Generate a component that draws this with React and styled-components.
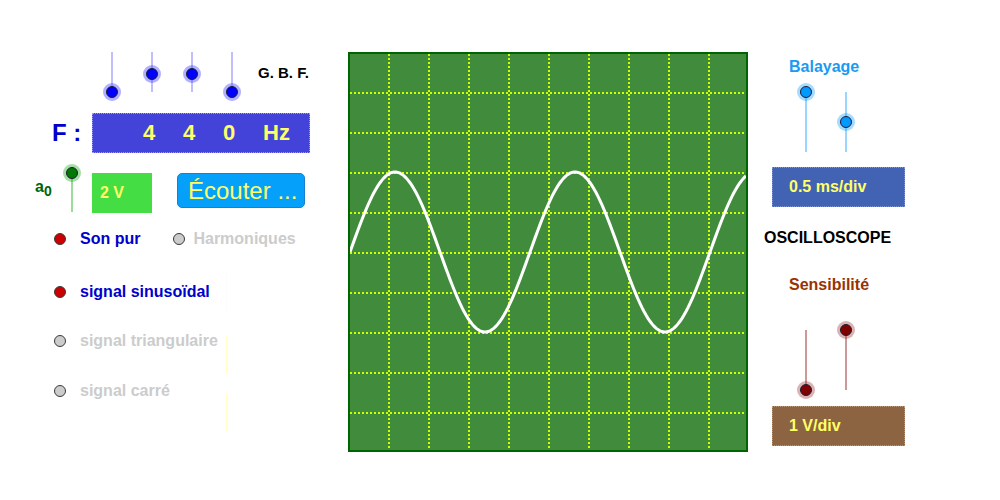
import React from "react"
import styled, { createGlobalStyle } from "styled-components"

const GlobalStyle = createGlobalStyle`
  body {
    margin: 0;
    background: #fff;
    font-family: "Liberation Sans", Arial, sans-serif;
  }
`

const knobs = {
  blue: { fill: "#0000ff", halo: "rgba(60, 60, 255, 0.4)", line: "#8080ff", lw: 1 },
  green: { fill: "#007a00", halo: "rgba(0, 160, 0, 0.35)", line: "#99dd99", lw: 2 },
  sky: { fill: "#0099ff", halo: "rgba(0, 153, 255, 0.35)", line: "#99d6ff", lw: 2 },
  wine: { fill: "#800000", halo: "rgba(150, 40, 40, 0.35)", line: "#cc9999", lw: 2 },
}

const Page = styled.div`
  display: flex;
  align-items: flex-start;
  width: 1000px;
  height: 500px;
  overflow: hidden;
`

const LeftPanel = styled.div`
  width: 348px;
  padding-top: 52px;
  display: flex;
  flex-direction: column;
`

const SliderRow = styled.div`
  display: flex;
  height: 48px;
  padding-left: 104px;
`

const SliderGroup = styled.div`
  display: flex;
  gap: 24px;
`

const Gbf = styled.div`
  margin: 13px 0 0 18px;
  font-size: 15px;
  line-height: 16px;
  font-weight: bold;
  color: #000;
`

const Track = styled.div`
  position: relative;
  flex-shrink: 0;
  width: 16px;
  height: ${({ $h }) => $h}px;

  &::before {
    content: "";
    position: absolute;
    left: 50%;
    transform: translateX(-50%);
    top: ${({ $from }) => $from}px;
    height: ${({ $len }) => $len}px;
    width: ${({ $kind }) => knobs[$kind].lw}px;
    background: ${({ $kind }) => knobs[$kind].line};
  }
`

const Knob = styled.span`
  position: absolute;
  left: 2px;
  top: ${({ $at }) => $at - 6}px;
  width: 12px;
  height: 12px;
  box-sizing: border-box;
  border-radius: 50%;
  border: 1px solid #1c1c33;
  background: ${({ $kind }) => knobs[$kind].fill};
  box-shadow: 0 0 0 3px ${({ $kind }) => knobs[$kind].halo};
`

const Slider = ({ kind, h, from, len, at }) => (
  <Track $kind={kind} $h={h} $from={from} $len={len}>
    <Knob $kind={kind} $at={at} />
  </Track>
)

const FRow = styled.div`
  display: flex;
  align-items: center;
  height: 40px;
  margin-top: 13px;
  padding-left: 52px;
`

const FLabel = styled.div`
  width: 40px;
  font-size: 24px;
  font-weight: bold;
  color: #0000cc;
`

const FreqBox = styled.div`
  display: flex;
  align-items: center;
  box-sizing: border-box;
  width: 218px;
  height: 40px;
  padding-left: 50px;
  background: #4343d9;
  border: 1px dotted #9a9aff;
`

const Digit = styled.span`
  width: 40px;
  font-size: 22px;
  font-weight: bold;
  color: #ffff66;
`

const AmpRow = styled.div`
  display: flex;
  align-items: flex-start;
  height: 48px;
  margin-top: 12px;
  padding-left: 35px;
`

const A0 = styled.div`
  width: 29px;
  margin-top: 13px;
  font-size: 16px;
  font-weight: bold;
  color: #006600;

  sub {
    font-size: 14px;
  }
`

const LevelBox = styled.div`
  display: flex;
  align-items: center;
  box-sizing: border-box;
  width: 60px;
  height: 40px;
  margin: 8px 0 0 12px;
  padding-left: 8px;
  background: #44dd44;
  font-size: 16px;
  font-weight: bold;
  color: #ffff66;
`

const ListenButton = styled.button`
  box-sizing: border-box;
  width: 128px;
  height: 35px;
  margin: 8px 0 0 25px;
  padding: 0 0 0 10px;
  text-align: left;
  background: #05a0fa;
  border: 1px solid #1a7fd0;
  border-radius: 5px;
  font-family: "Liberation Sans", Arial, sans-serif;
  font-size: 24px;
  line-height: 31px;
  color: #ffff66;
`

const RadioList = styled.div`
  display: flex;
  flex-direction: column;
  margin-top: 16px;
`

const RadioRow = styled.div`
  position: relative;
  display: flex;
  align-items: center;
  height: 20px;
  margin-top: ${({ $mt }) => $mt || 0}px;
  padding-left: 54px;

  ${({ $hint }) =>
    $hint &&
    `
    &::after {
      content: "";
      position: absolute;
      left: 226px;
      top: ${$hint}px;
      height: 37px;
      border-left: 1px dotted #ffffc0;
    }
  `}
`

const Radio = styled.span`
  flex-shrink: 0;
  width: 12px;
  height: 12px;
  box-sizing: border-box;
  border-radius: 50%;
  border: 1px solid #3a3a3a;
  background: ${({ $on }) => ($on ? "#cc0000" : "#cccccc")};
  margin-left: ${({ $ml }) => $ml || 0}px;
`

const RadioText = styled.span`
  margin-left: ${({ $ml }) => $ml || 14}px;
  font-size: 16px;
  font-weight: bold;
  color: ${({ $on }) => ($on ? "#0000cc" : "#cccccc")};
`

const ScreenColumn = styled.div`
  padding-top: 52px;
`

const Screen = styled.div`
  box-sizing: border-box;
  width: 400px;
  height: 400px;
  background: #418b3d;
  border: 2px solid #006400;

  svg {
    display: block;
  }
`

const RightPanel = styled.div`
  display: flex;
  flex-direction: column;
  align-items: flex-start;
  padding: 59px 0 0 16px;
`

const Title = styled.div`
  margin: ${({ $mt }) => $mt || 0}px 0 0 25px;
  font-size: 16px;
  line-height: 16px;
  font-weight: bold;
  color: ${({ $color }) => $color};
`

const SliderPair = styled.div`
  display: flex;
  gap: 24px;
  margin: ${({ $mt }) => $mt}px 0 0 34px;
`

const Readout = styled.div`
  display: flex;
  align-items: center;
  box-sizing: border-box;
  width: 133px;
  height: 40px;
  margin: ${({ $mt }) => $mt}px 0 0 8px;
  padding-left: 16px;
  background: ${({ $bg }) => $bg};
  border: 1px dotted ${({ $edge }) => $edge};
  font-size: 16px;
  font-weight: bold;
  color: #ffff66;
`

const ScopeName = styled.div`
  margin-top: 23px;
  font-size: 16px;
  line-height: 16px;
  font-weight: bold;
  color: #000;
`

const SIZE = 396
const wave = Array.from({ length: SIZE / 2 + 1 }, (_, i) => {
  const x = i * 2
  const y = 198 - 80 * Math.sin((2 * Math.PI * x) / 180)
  return `${i ? "L" : "M"}${x} ${y.toFixed(2)}`
}).join(" ")

const grid = Array.from({ length: 9 }, (_, i) => 40 * (i + 1) - 1)

const Oscilloscope = () => (
  <Screen>
    <svg width={SIZE} height={SIZE} viewBox={`0 0 ${SIZE} ${SIZE}`}>
      <g stroke="#ccff00" strokeWidth="2" strokeDasharray="2 2" shapeRendering="crispEdges">
        {grid.map((p) => (
          <line key={"v" + p} x1={p} x2={p} y1="0" y2={SIZE} />
        ))}
        {grid.map((p) => (
          <line key={"h" + p} x1="0" x2={SIZE} y1={p} y2={p} />
        ))}
      </g>
      <path d={wave} fill="none" stroke="#fff" strokeWidth="3" />
    </svg>
  </Screen>
)

const App = () => (
  <Page>
    <GlobalStyle />
    <LeftPanel>
      <SliderRow>
        <SliderGroup>
          <Slider kind="blue" h={48} from={0} len={40} at={40} />
          <Slider kind="blue" h={48} from={0} len={40} at={22} />
          <Slider kind="blue" h={48} from={0} len={40} at={22} />
          <Slider kind="blue" h={48} from={0} len={40} at={40} />
        </SliderGroup>
        <Gbf>G. B. F.</Gbf>
      </SliderRow>

      <FRow>
        <FLabel>F :</FLabel>
        <FreqBox>
          <Digit>4</Digit>
          <Digit>4</Digit>
          <Digit>0</Digit>
          <Digit>Hz</Digit>
        </FreqBox>
      </FRow>

      <AmpRow>
        <A0>
          a<sub>0</sub>
        </A0>
        <Slider kind="green" h={48} from={8} len={39} at={8} />
        <LevelBox>2 V</LevelBox>
        <ListenButton>Écouter ...</ListenButton>
      </AmpRow>

      <RadioList>
        <RadioRow>
          <Radio $on />
          <RadioText $on>Son pur</RadioText>
          <Radio $ml={33} />
          <RadioText $ml={8}>Harmoniques</RadioText>
        </RadioRow>
        <RadioRow $mt={33} $hint={-9}>
          <Radio $on />
          <RadioText $on>signal sinusoïdal</RadioText>
        </RadioRow>
        <RadioRow $mt={29} $hint={5}>
          <Radio />
          <RadioText>signal triangulaire</RadioText>
        </RadioRow>
        <RadioRow $mt={30} $hint={13}>
          <Radio />
          <RadioText>signal carré</RadioText>
        </RadioRow>
      </RadioList>
    </LeftPanel>

    <ScreenColumn>
      <Oscilloscope />
    </ScreenColumn>

    <RightPanel>
      <Title $color="#1a9bf0">Balayage</Title>
      <SliderPair $mt={9}>
        <Slider kind="sky" h={76} from={8} len={60} at={8} />
        <Slider kind="sky" h={76} from={8} len={60} at={38} />
      </SliderPair>
      <Readout $mt={7} $bg="#4263b3" $edge="#7d95d6">
        0.5 ms/div
      </Readout>

      <ScopeName>OSCILLOSCOPE</ScopeName>

      <Title $mt={31} $color="#993300">
        Sensibilité
      </Title>
      <SliderPair $mt={29}>
        <Slider kind="wine" h={76} from={8} len={60} at={68} />
        <Slider kind="wine" h={76} from={8} len={60} at={8} />
      </SliderPair>
      <Readout $mt={8} $bg="#8c6441" $edge="#b89878">
        1 V/div
      </Readout>
    </RightPanel>
  </Page>
)

export default App
